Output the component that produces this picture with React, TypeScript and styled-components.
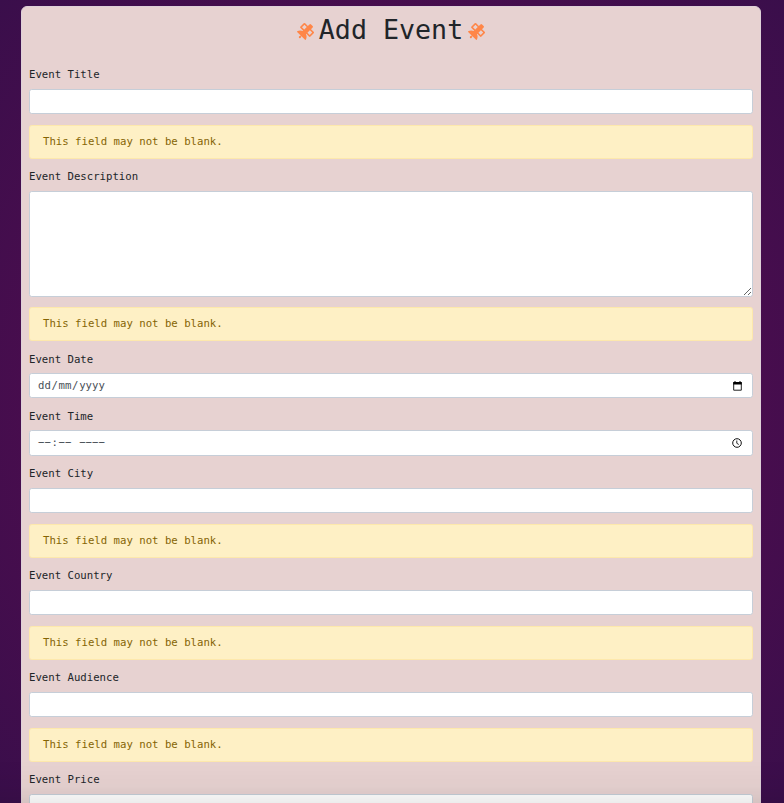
import React from "react";
import styled, { createGlobalStyle } from "styled-components";
import { FaSatellite } from "react-icons/fa";

const GlobalStyle = createGlobalStyle`
  *, *::before, *::after { box-sizing: border-box; }
  html, body { margin: 0; height: 100%; overflow: hidden; }
  body {
    font-family: "DejaVu Sans Mono", "Liberation Mono", monospace;
    font-size: 10.6667px;
    line-height: 16px;
    color: #212529;
  }
`;

const Page = styled.main`
  height: 803px;
  padding: 6px 23px 0 21px;
  overflow: hidden;
  background: radial-gradient(ellipse farthest-corner at center, #4c0e4f 0%, #490d4e 62%, #3a0e4b 100%);
`;

const Card = styled.form`
  height: 860px;
  padding: 0 7px;
  background: #e7d2d1;
  border: 1px solid #ded0d8;
  border-radius: 6px;
`;

const Heading = styled.h1`
  display: flex;
  align-items: center;
  justify-content: center;
  gap: 5px;
  height: 50px;
  margin: 0;
  padding-bottom: 4px;
  font-size: 26.6667px;
  font-weight: 400;
  line-height: 32px;

  svg {
    flex: none;
    margin-top: 3px;
    color: #ff8648;
  }
`;

const Label = styled.label<{ $top?: number }>`
  display: block;
  height: 32px;
  padding-top: ${(p) => p.$top ?? 10}px;
`;

const Control = styled.div<{ $height?: number }>`
  display: flex;
  align-items: center;
  justify-content: space-between;
  width: 100%;
  height: ${(p) => p.$height ?? 25}px;
  padding: 0 10px 0 8px;
  color: #495057;
  background: #fff;
  border: 1px solid #c6ced8;
  border-radius: 2.67px;
`;

const Segments = styled.div`
  display: flex;
  gap: 0.67px;
  white-space: pre;
`;

const TextInput = styled.input`
  display: block;
  width: 100%;
  height: 25px;
  padding: 4px 8px;
  font: inherit;
  color: #495057;
  background: #fff;
  border: 1px solid #c6ced8;
  border-radius: 2.67px;
`;

const TextArea = styled(TextInput)`
  height: 106px;
  resize: vertical;
`;

const Alert = styled.div<{ $gap?: number }>`
  height: 34px;
  margin-top: ${(p) => p.$gap ?? 11}px;
  padding: 8px 13px;
  color: #856404;
  background: #fef0c5;
  border: 1px solid #fde8ac;
  border-radius: 2.67px;
`;

const BottomShade = styled.div`
  position: fixed;
  left: 0;
  right: 0;
  bottom: 0;
  height: 43px;
  pointer-events: none;
  background: linear-gradient(rgba(0, 0, 0, 0), rgba(0, 0, 0, 0.025) 60%, rgba(0, 0, 0, 0.07));
`;

const BLANK = "This field may not be blank.";

const CalendarIcon = () => (
  <svg width="9" height="10" viewBox="0 0 9 10" fill="none">
    <path d="M.7 1.5h7.6v7.7H.7z" stroke="#222" strokeWidth="1" />
    <path d="M.3 1h8.4v2.5H.3zM1.5 0h1v1h-1zM6.5 0h1v1h-1z" fill="#000" />
  </svg>
);

const ClockIcon = () => (
  <svg width="10" height="10" viewBox="0 0 10 10" fill="none" stroke="#111">
    <circle cx="5" cy="5" r="4.3" strokeWidth="1" />
    <path d="M4.8 2.5v2.8l2 1.2" strokeWidth=".9" />
  </svg>
);

const SegmentedValue = ({ parts }: { parts: string[] }) => (
  <Segments>
    {parts.map((part, i) => (
      <span key={i}>{part}</span>
    ))}
  </Segments>
);

const TextField = ({ name }: { name: string }) => (
  <>
    <Label>{name}</Label>
    <TextInput aria-label={name} />
    <Alert>{BLANK}</Alert>
  </>
);

export default function App() {
  return (
    <>
      <GlobalStyle />
      <Page>
        <Card>
          <Heading>
            <FaSatellite size={17} />
            Add Event
            <FaSatellite size={17} />
          </Heading>
          <TextField name="Event Title" />
          <Label>Event Description</Label>
          <TextArea as="textarea" aria-label="Event Description" />
          <Alert $gap={10}>{BLANK}</Alert>
          <Label $top={11}>Event Date</Label>
          <Control>
            <SegmentedValue parts={["dd", "/", "mm", "/", "yyyy"]} />
            <CalendarIcon />
          </Control>
          <Label $top={11}>Event Time</Label>
          <Control $height={26}>
            <SegmentedValue parts={["−−", ":", "−−", " ", "−−−−"]} />
            <ClockIcon />
          </Control>
          <TextField name="Event City" />
          <TextField name="Event Country" />
          <TextField name="Event Audience" />
          <Label>Event Price</Label>
          <TextInput aria-label="Event Price" />
        </Card>
      </Page>
      <BottomShade />
    </>
  );
}
